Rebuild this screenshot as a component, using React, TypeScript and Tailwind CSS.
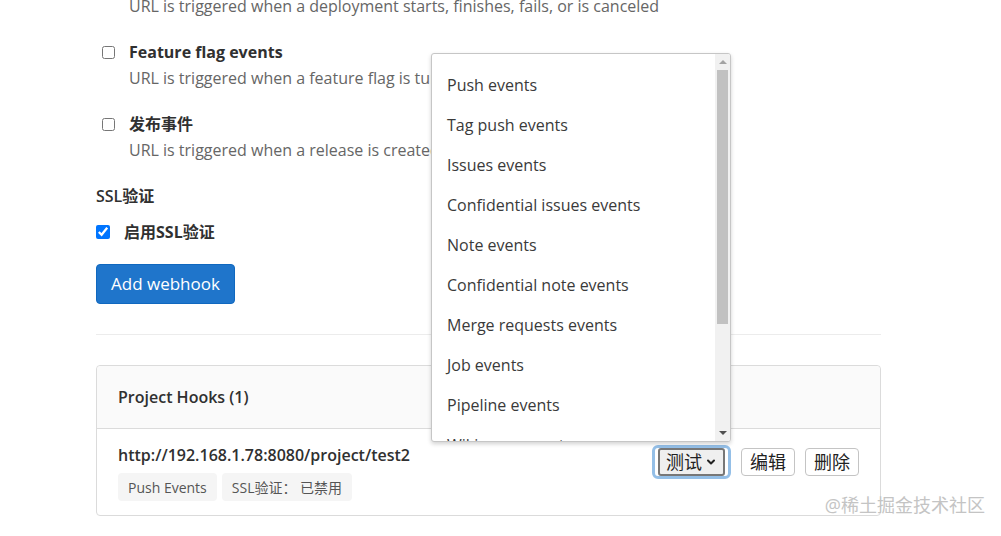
import React from "react";
import { ChevronDown } from "lucide-react";

const font = "font-['Segoe_UI','Open_Sans','Noto_Sans_CJK_SC',sans-serif]";

const triggerEvents = [
  { name: "Feature flag events", desc: "URL is triggered when a feature flag is turned on or off" },
  { name: "发布事件", desc: "URL is triggered when a release is created or updated" },
];

const menuItems = [
  "Push events",
  "Tag push events",
  "Issues events",
  "Confidential issues events",
  "Note events",
  "Confidential note events",
  "Merge requests events",
  "Job events",
  "Pipeline events",
  "Wiki page events",
  "Deployment events",
];

function TestMenu() {
  return (
    <div className="absolute right-0 bottom-[calc(100%+3px)] w-[300px] h-[389px] bg-white border border-[#c6c6c6] rounded-[3px] shadow-[0_2px_4px_rgba(0,0,0,0.18)] flex overflow-hidden z-10">
      <ul className="flex-1 pt-[11px] overflow-hidden">
        {menuItems.map((item) => (
          <li key={item} className="h-[40px] flex items-center pl-[15px] text-[16px] text-[#3a3a3a] whitespace-nowrap">
            {item}
          </li>
        ))}
      </ul>
      {/* scrollbar */}
      <div className="w-[15px] bg-[#f1f1f1] flex flex-col items-center">
        <div className="h-[16px] flex items-center justify-center">
          <div className="w-0 h-0 border-l-[4px] border-r-[4px] border-b-[4px] border-l-transparent border-r-transparent border-b-[#a3a3a3]" />
        </div>
        <div className="w-[11px] h-[254px] bg-[#c1c1c1]" />
        <div className="flex-1" />
        <div className="h-[16px] flex items-center justify-center">
          <div className="w-0 h-0 border-l-[4px] border-r-[4px] border-t-[4px] border-l-transparent border-r-transparent border-t-[#505050]" />
        </div>
      </div>
    </div>
  );
}

export default function App() {
  return (
    <div className={`relative w-full h-[536px] overflow-hidden bg-white text-[#303030] ${font}`}>
      <div className="ml-[96px] w-[785px] -mt-[6px]">
        <p className="pl-[33px] text-[16px] leading-[24px] text-[#666] whitespace-nowrap">
          URL is triggered when a deployment starts, finishes, fails, or is canceled
        </p>

        {triggerEvents.map((ev) => (
          <div key={ev.name} className="mt-[22px]">
            <label className="flex items-center h-[24px]">
              <input type="checkbox" className="ml-[6px] w-[13px] h-[13px]" />
              <span className="ml-[14px] text-[16px] font-bold">{ev.name}</span>
            </label>
            <p className="mt-[2px] pl-[33px] text-[16px] leading-[24px] text-[#666] whitespace-nowrap">{ev.desc}</p>
          </div>
        ))}

        <h4 className="mt-[22px] text-[16px] leading-[24px] font-semibold">SSL验证</h4>
        <label className="mt-[12px] flex items-center h-[24px]">
          <input type="checkbox" defaultChecked className="w-[14px] h-[14px] accent-[#0075ff]" />
          <span className="ml-[14px] text-[16px] font-bold">启用SSL验证</span>
        </label>

        <button className="mt-[20px] h-[40px] px-[14px] rounded-[4px] bg-[#1f75cb] border border-[#1068bf] text-white text-[17px]">
          Add webhook
        </button>

        <hr className="mt-[30px] border-[#ececec]" />

        <div className="mt-[30px] border border-[#dbdbdb] rounded-[4px]">
          <div className="h-[63px] flex items-center px-[21px] bg-[#fafafa] border-b border-[#dbdbdb] rounded-t-[4px]">
            <h3 className="text-[16px] font-semibold">Project Hooks (1)</h3>
          </div>
          <div className="flex items-start justify-between pl-[21px] pr-[21px] pt-[14px] pb-[14px]">
            <div>
              <div className="text-[16px] leading-[24px] font-semibold">http://192.168.1.78:8080/project/test2</div>
              <div className="mt-[6px] flex gap-[5px] text-[14px] text-[#555]">
                <span className="h-[28px] px-[10px] flex items-center bg-[#f5f5f5] rounded-[4px]">Push Events</span>
                <span className="h-[28px] px-[10px] flex items-center bg-[#f5f5f5] rounded-[4px]">SSL验证： 已禁用</span>
              </div>
            </div>
            <div className="mt-[2px] flex items-center gap-[10px]">
              <div className="relative">
                <TestMenu />
                <button className="h-[34px] px-[3px] rounded-[6px] border-[3px] border-[#94bfe7] flex items-center">
                  <span className="h-[28px] px-[6px] flex items-center gap-[3px] rounded-[3px] border-2 border-[#777] bg-[#efefef] text-[18px] text-[#222]">
                    测试
                    <ChevronDown size={12} strokeWidth={4} />
                  </span>
                </button>
              </div>
              <button className="h-[28px] px-[8px] flex items-center rounded-[4px] border border-[#c4c4c4] bg-white text-[18px] text-[#222]">
                编辑
              </button>
              <button className="h-[28px] px-[8px] flex items-center rounded-[4px] border border-[#c4c4c4] bg-white text-[18px] text-[#222]">
                删除
              </button>
            </div>
          </div>
        </div>
      </div>

      <div className="absolute right-[16px] bottom-[17px] text-[18px] text-[#c4c4c4]">@稀土掘金技术社区</div>
    </div>
  );
}
